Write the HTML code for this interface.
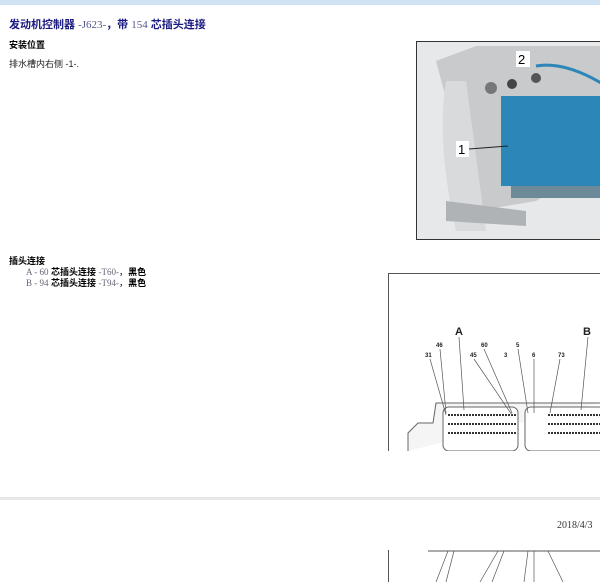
<!DOCTYPE html>
<html><head><meta charset="utf-8"><style>
body{margin:0;width:600px;height:582px;overflow:hidden;background:#fff;font-family:"Liberation Sans","Noto Sans CJK SC",sans-serif;position:relative}
.a{position:absolute;white-space:nowrap}
.s{font-family:"Liberation Serif","Noto Serif CJK SC",serif;font-weight:normal;color:#667}
</style></head><body>
<div class="a" style="left:0;top:0;width:600px;height:5px;background:#cfe3f5"></div>
<div class="a" style="left:9px;top:16px;font-size:11px;font-weight:bold;color:#1a1a80">发动机控制器 <span class="s" style="color:#558">-J623-</span>，带 <span class="s" style="color:#558">154</span> 芯插头连接</div>
<div class="a" style="left:9px;top:38px;font-size:9px;font-weight:bold">安装位置</div>
<div class="a" style="left:9px;top:57px;font-size:9px;color:#222">排水槽内右侧 -1-.</div>
<div class="a" style="left:9px;top:254px;font-size:9px;font-weight:bold">插头连接</div>
<div class="a" style="left:26px;top:265px;font-size:9px"><span class="s">A - 60</span> <b>芯插头连接</b> <span class="s">-T60-</span>，<b>黑色</b></div>
<div class="a" style="left:26px;top:276px;font-size:9px"><span class="s">B - 94</span> <b>芯插头连接</b> <span class="s">-T94-</span>，<b>黑色</b></div>

<svg class="a" style="left:416px;top:41px" width="184" height="200">
<rect x="0.5" y="0.5" width="190" height="198" fill="#e6e8ea" stroke="#333"/>
<path d="M20 20 L60 5 L190 5 L190 120 L120 160 L60 170 Z" fill="#c8cacc"/>
<path d="M30 40 Q20 100 40 190 L70 190 L50 40 Z" fill="#d8dadc"/>
<rect x="85" y="55" width="110" height="90" fill="#2c86b8"/>
<rect x="95" y="145" width="100" height="12" fill="#6d8a99"/>
<path d="M120 25 Q150 20 190 45" stroke="#2c86b8" stroke-width="3" fill="none"/>
<path d="M30 160 L110 170 L110 185 L30 180 Z" fill="#b0b3b6"/>
<circle cx="75" cy="47" r="6" fill="#777"/><circle cx="96" cy="43" r="5" fill="#444"/><circle cx="120" cy="37" r="5" fill="#555"/>
<rect x="100" y="10" width="14" height="16" fill="#fff"/><text x="102" y="23" font-size="13" font-family="Liberation Sans">2</text>
<rect x="40" y="100" width="13" height="16" fill="#fff"/><text x="42" y="113" font-size="13" font-family="Liberation Sans">1</text>
<line x1="53" y1="108" x2="92" y2="105" stroke="#222"/>
</svg>

<svg class="a" style="left:388px;top:273px" width="212" height="178">
<path d="M0.5 178 V0.5 H212" stroke="#555" fill="none"/>
<g font-family="Liberation Sans" font-weight="bold" fill="#222">
<text x="67" y="62" font-size="11">A</text><text x="195" y="62" font-size="11">B</text>
<g font-size="6"><text x="48" y="74">46</text><text x="37" y="84">31</text><text x="93" y="74">60</text><text x="82" y="84">45</text><text x="116" y="84">3</text><text x="128" y="74">5</text><text x="144" y="84">6</text><text x="170" y="84">73</text></g></g>
<path d="M20 178 V160 L30 150 L45 150 L48 130 H212" stroke="#666" fill="#f5f5f5"/>
<rect x="55" y="134" width="75" height="44" rx="6" fill="#fff" stroke="#666"/>
<rect x="137" y="134" width="80" height="44" rx="6" fill="#fff" stroke="#666"/>
<g stroke="#333" stroke-width="2" stroke-dasharray="2 1"><line x1="60" y1="142" x2="128" y2="142"/><line x1="60" y1="151" x2="128" y2="151"/><line x1="60" y1="160" x2="128" y2="160"/>
<line x1="160" y1="142" x2="212" y2="142"/><line x1="160" y1="151" x2="212" y2="151"/><line x1="160" y1="160" x2="212" y2="160"/></g>
<g stroke="#555" fill="none" stroke-width="0.7"><line x1="71" y1="64" x2="76" y2="137"/><line x1="200" y1="64" x2="193" y2="137"/><line x1="52" y1="76" x2="58" y2="140"/><line x1="42" y1="86" x2="58" y2="142"/><line x1="96" y1="76" x2="124" y2="140"/><line x1="86" y1="86" x2="124" y2="142"/><line x1="130" y1="76" x2="140" y2="140"/><line x1="146" y1="86" x2="146" y2="140"/><line x1="172" y1="86" x2="162" y2="140"/></g>
</svg>

<div class="a" style="left:0;top:497px;width:600px;height:3px;background:#e8e8e8"></div>
<div class="a" style="left:557px;top:520px;font-size:10px;font-family:'Liberation Serif',serif;color:#333">2018/4/3</div>
<svg class="a" style="left:388px;top:548px" width="212" height="34">
<path d="M0.5 34 V2 M40 3 H212" stroke="#555" fill="none"/>
<g stroke="#555" stroke-width="0.7"><line x1="60" y1="3" x2="48" y2="34"/><line x1="66" y1="3" x2="58" y2="34"/><line x1="110" y1="3" x2="92" y2="34"/><line x1="116" y1="3" x2="104" y2="34"/><line x1="140" y1="3" x2="136" y2="34"/><line x1="146" y1="3" x2="146" y2="34"/><line x1="160" y1="3" x2="175" y2="34"/></g>
</svg>
</body></html>
